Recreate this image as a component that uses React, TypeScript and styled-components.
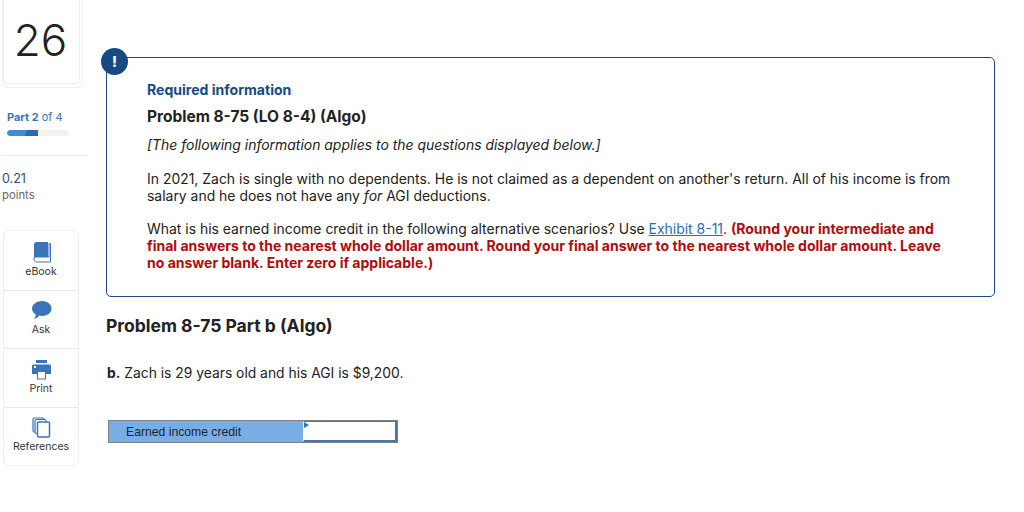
import { createGlobalStyle } from 'styled-components'
import styled from 'styled-components'

const GlobalStyle = createGlobalStyle`
  html, body {
    margin: 0;
    padding: 0;
    background: #fff;
    font-family: 'Inter', 'Liberation Sans', sans-serif;
    color: #222;
  }
`

const Page = styled.div`
  width: 1024px;
  height: 512px;
  overflow: hidden;
  display: flex;
`

const Sidebar = styled.aside`
  width: 88px;
  flex-shrink: 0;
  padding-left: 2px;
  box-sizing: border-box;
`

const NumberCard = styled.div`
  width: 81px;
  height: 88px;
  box-sizing: border-box;
  border: 1px solid #f0f0f0;
  border-top: 0;
  border-radius: 0 0 6px 6px;
`

const NumberInner = styled.div`
  width: 77px;
  height: 84px;
  box-sizing: border-box;
  border: 1px solid #eeeeee;
  border-top: 0;
  border-radius: 0 0 6px 6px;
  display: flex;
  justify-content: center;
  padding: 13px 2px 0 0;
  font-size: 44px;
  font-weight: 300;
  line-height: 54px;
  color: #222;
`

const PartLabel = styled.div`
  margin: 21px 0 0 5px;
  font-size: 11px;
  line-height: 16px;
  color: #3b73b5;

  b {
    font-weight: 700;
  }
`

const Progress = styled.div`
  margin: 5px 0 0 5px;
  width: 62px;
  height: 6px;
  border-radius: 3px;
  background: #f2f2f2;
  overflow: hidden;
`

const ProgressFill = styled.div`
  height: 100%;
  background: linear-gradient(115deg, #3f8bd4 0 60%, #2a6cb0 60%);
  border-radius: 3px 0 0 3px;
`

const Divider = styled.hr`
  margin: 19px 0 0;
  border: 0;
  border-top: 1px solid #eaeaea;
`

const Points = styled.div`
  margin-top: 14px;
  font-size: 12.5px;
  line-height: 17px;
  color: #1f4e86;
`

const PointsLabel = styled.div`
  font-size: 11.3px;
  line-height: 17px;
  color: #666;
`

const ToolCard = styled.div`
  margin: 26px 0 0 1px;
  width: 76px;
  border: 1px solid #efefef;
  border-radius: 6px;
  box-sizing: border-box;
`

const Tool = styled.div`
  height: 58.5px;
  display: flex;
  flex-direction: column;
  align-items: center;
  justify-content: flex-end;
  padding-bottom: 12px;
  box-sizing: border-box;
  font-size: 10.5px;
  line-height: 13px;
  color: #333;
  gap: 2px;

  & + & {
    border-top: 1px solid #e9e9e9;
  }
`

const Main = styled.main`
  flex: 1;
  padding: 57px 0 0 18px;
  min-width: 0;
`

const InfoBox = styled.section`
  position: relative;
  width: 889px;
  height: 240px;
  box-sizing: border-box;
  border: 1px solid #164a83;
  border-radius: 5px;
  padding: 22px 40px 0;
  font-size: 13.95px;
  line-height: 17px;
`

const Badge = styled.div`
  position: absolute;
  left: -6px;
  top: -10px;
  width: 27px;
  height: 27px;
  border-radius: 50%;
  background: #164a83;
  color: #fff;
  display: flex;
  align-items: center;
  justify-content: center;
  font-size: 14px;
  font-weight: 800;
`

const Eyebrow = styled.div`
  font-size: 14.05px;
  line-height: 20px;
  font-weight: 700;
  color: #164a83;
`

const BoxTitle = styled.h2`
  margin: 7px 0 0;
  font-size: 15.5px;
  line-height: 20px;
  font-weight: 700;
  color: #222;
`

const Note = styled.p`
  margin: 9px 0 0;
  font-style: italic;
  line-height: 18px;
`

const Para = styled.p`
  margin: 16px 0 0;
`

const ExhibitLink = styled.a`
  color: #2a6fb5;
  text-decoration: underline;
`

const Warning = styled.b`
  color: #b00c0c;
  font-weight: 700;
  font-size: 14.03px;
`

const ProblemTitle = styled.h1`
  margin: 18px 0 0;
  font-size: 17.5px;
  line-height: 22px;
  font-weight: 700;
  color: #222;
`

const Question = styled.p`
  margin: 27px 0 0 1px;
  font-size: 13.85px;
  line-height: 18px;

  b {
    font-weight: 700;
  }
`

const AnswerRow = styled.div`
  margin: 38px 0 0 2px;
  width: 290px;
  height: 23px;
  display: flex;
  box-sizing: border-box;
  border: 1px solid #7f7f7f;
`

const AnswerLabel = styled.div`
  width: 194px;
  box-sizing: border-box;
  background: #78aee6;
  padding: 1px 0 0 17px;
  font-family: 'Liberation Sans', Arial, sans-serif;
  font-size: 12.2px;
  line-height: 20px;
  color: #1c2430;
`

const AnswerInput = styled.div`
  position: relative;
  flex: 1;
  background: #fff;
  border: 2px solid #4a76a8;
  border-top-width: 1px;
  border-left: 1px solid #fff;
`

const Marker = styled.span`
  position: absolute;
  left: 0;
  top: 0;
  border-left: 5px solid #2f74c4;
  border-top: 3px solid transparent;
  border-bottom: 3px solid transparent;
`

const BookIcon = () => (
  <svg width="21" height="21" viewBox="0 0 21 21">
    <path d="M3 17V2.500C3 1 4 0 5.500 0H17v15H5.500C4 15 3 16 3 17z" fill="#3a74ba" />
    <path d="M3 17c0-1.300 1-2 2.300-2H18V1.500h1.500V20H5.500C4 20 3 18.500 3 17z" fill="#fff" stroke="#3a74ba" strokeWidth="1" />
  </svg>
)

const BubbleIcon = () => (
  <svg width="21" height="21" viewBox="0 0 21 21">
    <path d="M11 1c5 0 9.500 3 9.500 7.500S16 16 11 16c-1 0-2-.1-2.800-.4C7 17.500 5 18.800 3 19c1-1 1.700-2.800 1.800-4.500C2.500 13 1 11 1 8.500 1 4 6 1 11 1z" fill="#3a74ba" />
  </svg>
)

const PrintIcon = () => (
  <svg width="21" height="21" viewBox="0 0 21 21">
    <rect x="5" y="1" width="11" height="3" fill="#3a74ba" />
    <path d="M1 7c0-1 .6-1.500 1.500-1.500h16c.9 0 1.500.5 1.500 1.500v8h-5v-3H6v3H1z" fill="#3a74ba" />
    <rect x="3" y="7" width="2" height="2" fill="#fff" />
    <rect x="6.500" y="12.500" width="8" height="7.500" fill="#fff" stroke="#3a74ba" />
  </svg>
)

const ReferencesIcon = () => (
  <svg width="21" height="21" viewBox="0 0 21 21" fill="#fff" stroke="#3a74ba" strokeWidth="1.200">
    <rect x="2" y="1" width="11" height="14" rx="1.500" />
    <rect x="4" y="2.500" width="11" height="14" rx="1.500" />
    <rect x="6.500" y="5" width="12" height="15" rx="1" strokeWidth="1.500" />
  </svg>
)

const tools = [
  { label: 'eBook', icon: <BookIcon /> },
  { label: 'Ask', icon: <BubbleIcon /> },
  { label: 'Print', icon: <PrintIcon /> },
  { label: 'References', icon: <ReferencesIcon /> },
]

export default function App() {
  return (
    <>
      <GlobalStyle />
      <Page>
        <Sidebar>
          <NumberCard>
            <NumberInner>26</NumberInner>
          </NumberCard>
          <PartLabel>
            <b>Part 2</b> of 4
          </PartLabel>
          <Progress>
            <ProgressFill style={{ width: `${(2 / 4) * 100}%` }} />
          </Progress>
          <Divider />
          <Points>0.21</Points>
          <PointsLabel>points</PointsLabel>
          <ToolCard>
            {tools.map((t) => (
              <Tool key={t.label}>
                {t.icon}
                {t.label}
              </Tool>
            ))}
          </ToolCard>
        </Sidebar>
        <Main>
          <InfoBox>
            <Badge>!</Badge>
            <Eyebrow>Required information</Eyebrow>
            <BoxTitle>Problem 8-75 (LO 8-4) (Algo)</BoxTitle>
            <Note>[The following information applies to the questions displayed below.]</Note>
            <Para>
              In 2021, Zach is single with no dependents. He is not claimed as a dependent on another's
              return. All of his income is from salary and he does not have any <i>for</i> AGI deductions.
            </Para>
            <Para>
              What is his earned income credit in the following alternative scenarios? Use{' '}
              <ExhibitLink>Exhibit 8-11</ExhibitLink>.{' '}
              <Warning>
                (Round your intermediate and final answers to the nearest whole dollar amount. Round your
                final answer to the nearest whole dollar amount. Leave no answer blank. Enter zero if
                applicable.)
              </Warning>
            </Para>
          </InfoBox>
          <ProblemTitle>Problem 8-75 Part b (Algo)</ProblemTitle>
          <Question>
            <b>b.</b> Zach is 29 years old and his AGI is $9,200.
          </Question>
          <AnswerRow>
            <AnswerLabel>Earned income credit</AnswerLabel>
            <AnswerInput>
              <Marker />
            </AnswerInput>
          </AnswerRow>
        </Main>
      </Page>
    </>
  )
}
